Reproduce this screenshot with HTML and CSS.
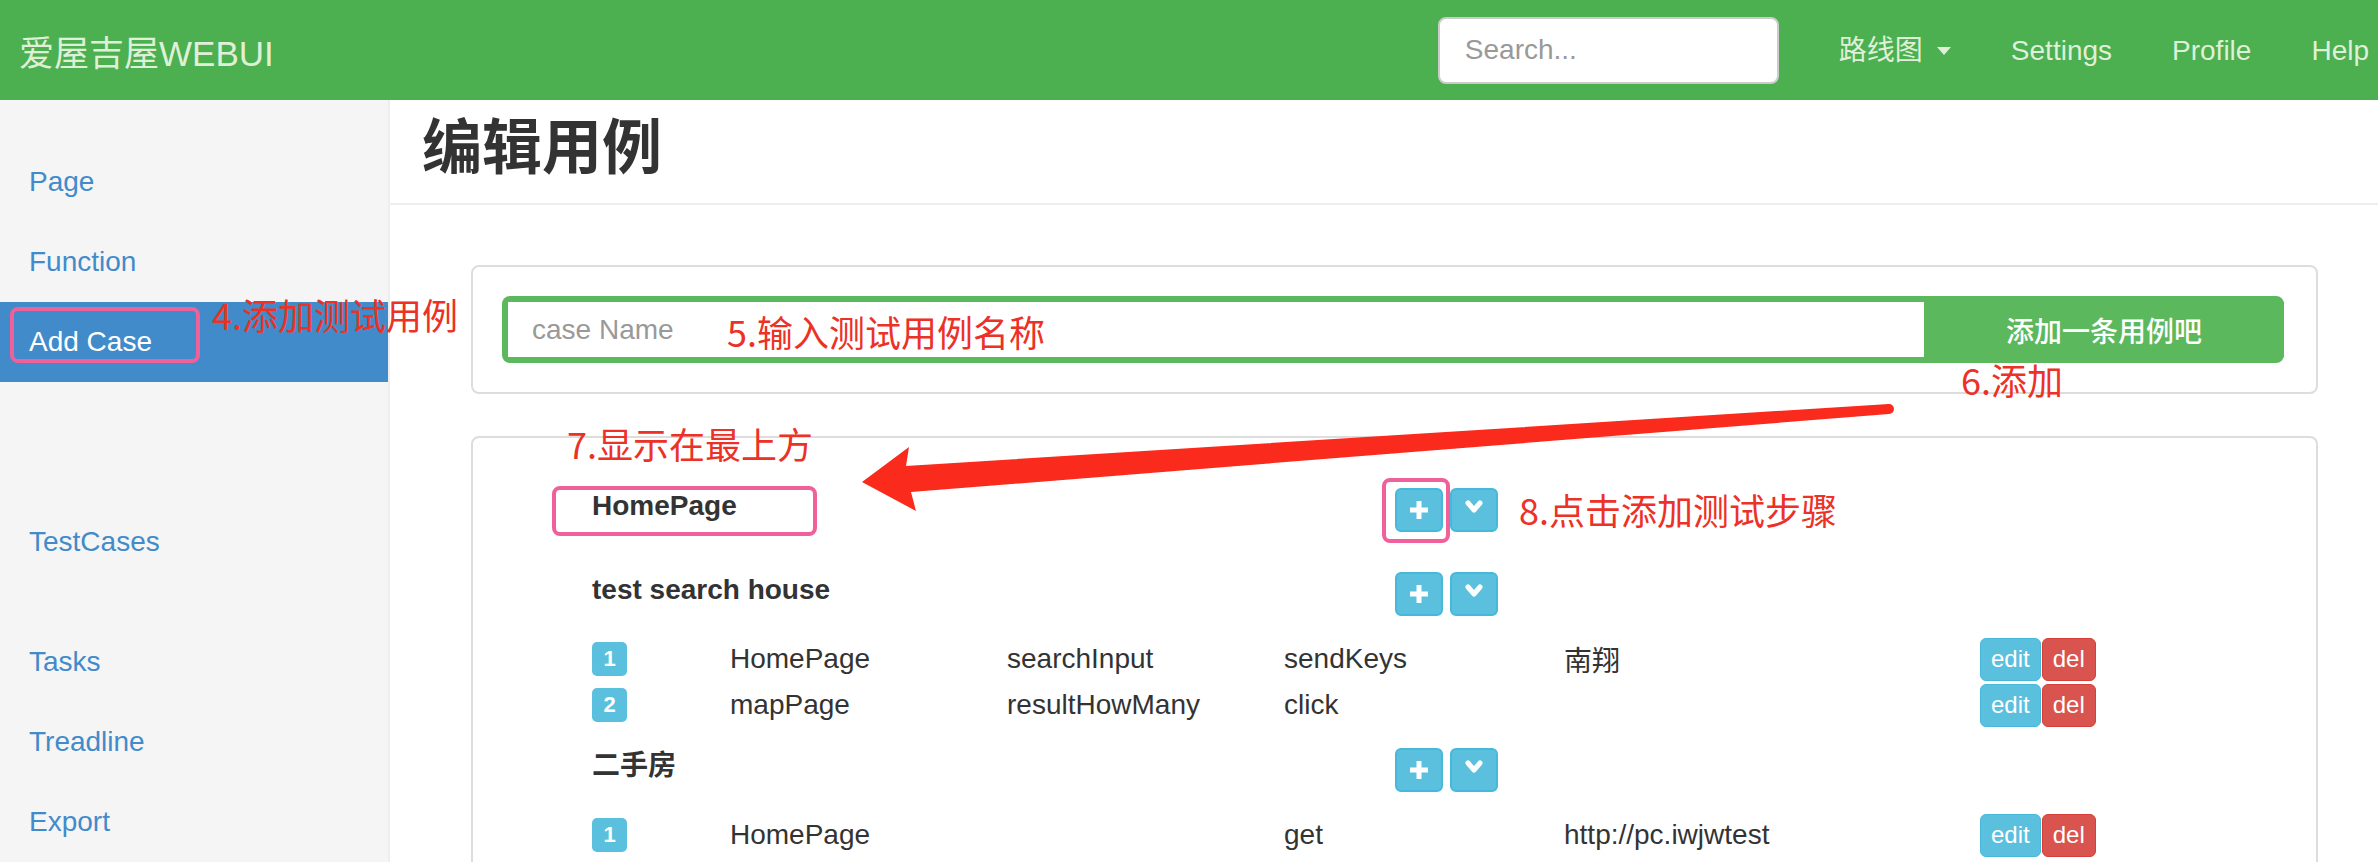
FILE: index.html
```html
<!DOCTYPE html>
<html lang="zh-CN">
<head>
<meta charset="utf-8">
<title>编辑用例</title>
<link rel="stylesheet" href="styles.css">
</head>
<body>
<nav class="navbar">
  <div class="brand">爱屋吉屋WEBUI</div>
  <input class="search" type="text" placeholder="Search...">
  <ul class="nav-links">
    <li><a href="#">路线图<span class="caret"></span></a></li>
    <li><a href="#">Settings</a></li>
    <li><a href="#">Profile</a></li>
    <li class="last"><a href="#">Help</a></li>
  </ul>
</nav>
<div class="layout">
  <aside class="sidebar">
    <ul class="nav-group">
      <li><a href="#">Page</a></li>
      <li><a href="#">Function</a></li>
      <li class="active"><a href="#">Add Case</a></li>
    </ul>
    <ul class="nav-group">
      <li><a href="#"></a></li>
      <li><a href="#">TestCases</a></li>
    </ul>
    <ul class="nav-group">
      <li><a href="#">Tasks</a></li>
      <li><a href="#">Treadline</a></li>
      <li><a href="#">Export</a></li>
    </ul>
  </aside>
  <main class="main">
    <div class="page-header"><h2>编辑用例</h2></div>
    <div class="content">
      <div class="panel add-panel">
        <div class="input-group">
          <input class="case-input" type="text" placeholder="case Name">
          <button class="add-btn">添加一条用例吧</button>
        </div>
      </div>
      <div class="panel cases-panel">
        <div class="case">
          <div class="case-head">
            <div class="case-name">HomePage</div>
            <span class="icon-btn"><svg width="20" height="20" viewBox="0 0 20 20"><path d="M10 1V19M1 10H19" stroke="#fff" stroke-width="5"/></svg></span>
            <span class="icon-btn"><svg class="chev" width="18" height="14" viewBox="0 0 18 14"><polyline points="3,3 9,10 15,3" fill="none" stroke="#fff" stroke-width="5" stroke-linecap="round" stroke-linejoin="round"/></svg></span>
          </div>
          <div class="steps"></div>
        </div>
        <div class="case">
          <div class="case-head">
            <div class="case-name">test search house</div>
            <span class="icon-btn"><svg width="20" height="20" viewBox="0 0 20 20"><path d="M10 1V19M1 10H19" stroke="#fff" stroke-width="5"/></svg></span>
            <span class="icon-btn"><svg class="chev" width="18" height="14" viewBox="0 0 18 14"><polyline points="3,3 9,10 15,3" fill="none" stroke="#fff" stroke-width="5" stroke-linecap="round" stroke-linejoin="round"/></svg></span>
          </div>
          <div class="steps">
            <div class="step">
              <span class="badge">1</span><span>HomePage</span><span>searchInput</span><span>sendKeys</span><span>南翔</span>
              <span class="actions"><span class="btn-xs btn-edit">edit</span><span class="btn-xs btn-del">del</span></span>
            </div>
            <div class="step">
              <span class="badge">2</span><span>mapPage</span><span>resultHowMany</span><span>click</span><span></span>
              <span class="actions"><span class="btn-xs btn-edit">edit</span><span class="btn-xs btn-del">del</span></span>
            </div>
          </div>
        </div>
        <div class="case">
          <div class="case-head">
            <div class="case-name">二手房</div>
            <span class="icon-btn"><svg width="20" height="20" viewBox="0 0 20 20"><path d="M10 1V19M1 10H19" stroke="#fff" stroke-width="5"/></svg></span>
            <span class="icon-btn"><svg class="chev" width="18" height="14" viewBox="0 0 18 14"><polyline points="3,3 9,10 15,3" fill="none" stroke="#fff" stroke-width="5" stroke-linecap="round" stroke-linejoin="round"/></svg></span>
          </div>
          <div class="steps">
            <div class="step">
              <span class="badge">1</span><span>HomePage</span><span></span><span>get</span><span>http://pc.iwjwtest</span>
              <span class="actions"><span class="btn-xs btn-edit">edit</span><span class="btn-xs btn-del">del</span></span>
            </div>
          </div>
        </div>
      </div>
    </div>
  </main>
</div>

<div class="pink pink-addcase"></div>
<div class="pink pink-homepage"></div>
<div class="pink pink-plus"></div>
<div class="annot annot-4">4.添加测试用例</div>
<div class="annot annot-5">5.输入测试用例名称</div>
<div class="annot annot-6">6.添加</div>
<div class="annot annot-7">7.显示在最上方</div>
<div class="annot annot-8">8.点击添加测试步骤</div>
<svg class="arrow" width="2378" height="862" viewBox="0 0 2378 862">
  <polygon points="1889,404 906,466 909,447 862,482 916,511 911,492 1889,414" fill="#fa2a1c"/>
  <circle cx="1889" cy="409" r="5" fill="#fa2a1c"/>
</svg>
</body>
</html>
```
FILE: styles.css
```css
* { box-sizing: border-box; }
html, body { margin: 0; height: 862px; overflow: hidden; }
body {
  position: relative;
  background: #fff;
  color: #333;
  font-family: "Liberation Sans", "Noto Sans CJK SC", sans-serif;
  font-size: 28px;
}

/* navbar */
.navbar {
  height: 100px;
  background: #4caf50;
  display: flex;
  align-items: center;
  padding: 0 9px 0 19px;
}
.brand { font-size: 35px; color: #dff0d8; flex: none; }
.search {
  margin-left: auto;
  width: 341px;
  height: 67px;
  border: 2px solid #ccc;
  border-radius: 8px;
  background: #fff;
  font-family: "Liberation Sans", sans-serif;
  font-size: 28px;
  padding: 0 25px;
  color: #555;
  outline: none;
}
.search::placeholder { color: #999; }
.nav-links { display: flex; list-style: none; margin: 0 0 0 30px; padding: 0; height: 100px; }
.nav-links a {
  display: block;
  height: 100px;
  line-height: 92px;
  padding: 5px 30px 0;
  color: #dff0d8;
  text-decoration: none;
  font-size: 28px;
}
.nav-links .last a { padding-right: 0; }
.caret {
  display: inline-block;
  vertical-align: middle;
  margin-left: 14px;
  margin-top: -4px;
  border-top: 8px solid #dff0d8;
  border-left: 7px solid transparent;
  border-right: 7px solid transparent;
}

/* layout */
.layout { display: flex; height: 762px; }
.sidebar {
  width: 390px;
  flex: none;
  background: #f5f5f5;
  border-right: 2px solid #eee;
  padding-top: 42px;
}
.nav-group { list-style: none; margin: 0 0 40px; padding: 0; }
.nav-group a {
  display: block;
  height: 80px;
  line-height: 80px;
  padding-left: 29px;
  color: #428bca;
  text-decoration: none;
  font-size: 28px;
}
.nav-group .active a { background: #428bca; color: #fff; }

.main { flex: 1; min-width: 0; }
.page-header { padding: 16px 0 21px 32px; border-bottom: 2px solid #eee; }
.page-header h2 {
  margin: 0;
  font-size: 60px;
  line-height: 66px;
  font-weight: bold;
  color: #333;
}
.content { padding: 60px 60px 0 81px; }
.panel { border: 2px solid #ddd; border-radius: 8px; background: #fff; }
.add-panel { padding: 29px 32px 29px 29px; }
.input-group {
  display: flex;
  height: 67px;
  background: #5cb85c;
  border-radius: 8px;
  padding: 6px 0 6px 6px;
}
.case-input {
  flex: 1;
  min-width: 0;
  border: 0;
  background: #fff;
  font-family: "Liberation Sans", sans-serif;
  font-size: 28px;
  padding: 0 0 0 24px;
  outline: none;
}
.case-input::placeholder { color: #999; }
.add-btn {
  width: 360px;
  flex: none;
  border: 0;
  background: #5cb85c;
  color: #fff;
  font-family: "Noto Sans CJK SC", sans-serif;
  font-size: 28px;
  font-weight: 500;
  padding: 0;
}

.cases-panel { margin-top: 42px; padding: 50px 0 0 119px; height: 520px; }
.case-head { display: flex; height: 44px; }
.case-name { width: 803px; font-weight: bold; line-height: 36px; }
.icon-btn {
  width: 48px;
  height: 44px;
  background: #5bc0de;
  border: 2px solid #46b8da;
  border-radius: 6px;
  display: flex;
  align-items: center;
  justify-content: center;
}
.icon-btn + .icon-btn { margin-left: 7px; }
.chev { margin-top: -6px; }
.steps { padding: 20px 0; }
.step {
  display: grid;
  grid-template-columns: 138px 277px 277px 280px 416px auto;
  height: 46px;
  align-items: center;
  white-space: nowrap;
}
.badge {
  width: 35px;
  height: 34px;
  background: #5bc0de;
  color: #fff;
  border-radius: 5px;
  font-size: 22px;
  font-weight: bold;
  display: flex;
  align-items: center;
  justify-content: center;
}
.actions { display: flex; }
.btn-xs {
  height: 43px;
  font-size: 24px;
  padding: 0 10px;
  border-radius: 6px;
  color: #fff;
  display: flex;
  align-items: center;
  border: 1px solid;
}
.btn-edit { background: #5bc0de; border-color: #46b8da; }
.btn-del { background: #d9534f; border-color: #d43f3a; margin-left: 1px; }

/* annotations overlay */
.annot {
  position: absolute;
  font-family: "Noto Sans CJK SC", sans-serif;
  color: #ec3127;
  font-size: 36px;
  line-height: 1;
  white-space: nowrap;
}
.annot-4 { left: 212px; top: 296px; }
.annot-5 { left: 727px; top: 313px; }
.annot-6 { left: 1961px; top: 361px; }
.annot-7 { left: 567px; top: 425px; }
.annot-8 { left: 1519px; top: 491px; }
.pink { position: absolute; border: 4px solid #f0609a; border-radius: 8px; }
.pink-addcase { left: 10px; top: 307px; width: 190px; height: 56px; }
.pink-homepage { left: 552px; top: 486px; width: 265px; height: 50px; }
.pink-plus { left: 1382px; top: 478px; width: 68px; height: 65px; }
.arrow { position: absolute; left: 0; top: 0; pointer-events: none; }
```
